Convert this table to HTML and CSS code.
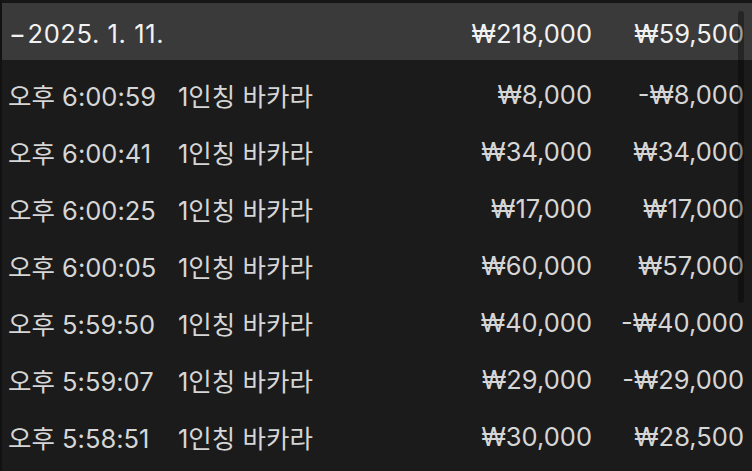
FILE: index.html
```html
<!DOCTYPE html>
<html lang="ko">
<head>
<meta charset="utf-8">
<link rel="stylesheet" href="styles.css">
</head>
<body>
<div class="panel">
  <div class="row head">
    <span class="c-time"><span class="dash">−</span>2025. 1. 11.</span>
    <span class="c-name"></span>
    <span class="c-amt">₩218,000</span>
    <span class="c-pl">₩59,500</span>
  </div>
  <div class="list">
    <div class="row"><span class="c-time">오후 6:00:59</span><span class="c-name">1인칭 바카라</span><span class="c-amt">₩8,000</span><span class="c-pl">-₩8,000</span></div>
    <div class="row"><span class="c-time">오후 6:00:41</span><span class="c-name">1인칭 바카라</span><span class="c-amt">₩34,000</span><span class="c-pl">₩34,000</span></div>
    <div class="row"><span class="c-time">오후 6:00:25</span><span class="c-name">1인칭 바카라</span><span class="c-amt">₩17,000</span><span class="c-pl">₩17,000</span></div>
    <div class="row"><span class="c-time">오후 6:00:05</span><span class="c-name">1인칭 바카라</span><span class="c-amt">₩60,000</span><span class="c-pl">₩57,000</span></div>
    <div class="row"><span class="c-time">오후 5:59:50</span><span class="c-name">1인칭 바카라</span><span class="c-amt">₩40,000</span><span class="c-pl">-₩40,000</span></div>
    <div class="row"><span class="c-time">오후 5:59:07</span><span class="c-name">1인칭 바카라</span><span class="c-amt">₩29,000</span><span class="c-pl">-₩29,000</span></div>
    <div class="row"><span class="c-time">오후 5:58:51</span><span class="c-name">1인칭 바카라</span><span class="c-amt">₩30,000</span><span class="c-pl">₩28,500</span></div>
  </div>
  <div class="scrollbar"></div>
</div>
</body>
</html>
```

FILE: styles.css
```css
html, body {
  margin: 0;
  padding: 0;
  background: #1b1b1b;
}
body {
  width: 752px;
  height: 471px;
  overflow: hidden;
  font-family: Inter, "Noto Sans CJK KR", sans-serif;
}
.panel {
  position: relative;
  height: 471px;
  border-top: 3px solid #161616;
  border-left: 2px solid #121212;
  box-sizing: border-box;
}
.row {
  display: grid;
  grid-template-columns: 170px 1fr 150px 152px;
  align-items: center;
  height: 57px;
  padding: 0 8px 0 6px;
  font-size: 25.5px;
  color: #d6d6d6;
  white-space: nowrap;
}
.head {
  background: #3a3a3a;
  color: #f2f2f2;
  padding-top: 3px;
  box-sizing: border-box;
}
.head .c-time {
  letter-spacing: 0.6px;
}
.dash {
  margin-left: 1px;
  margin-right: 1px;
}
.list {
  padding-top: 6px;
}
.c-amt, .c-pl {
  text-align: right;
}
.scrollbar {
  position: absolute;
  top: 8px;
  right: 8px;
  width: 6px;
  height: 292px;
  border-radius: 3px;
  background: rgba(0, 0, 0, 0.35);
}
```
